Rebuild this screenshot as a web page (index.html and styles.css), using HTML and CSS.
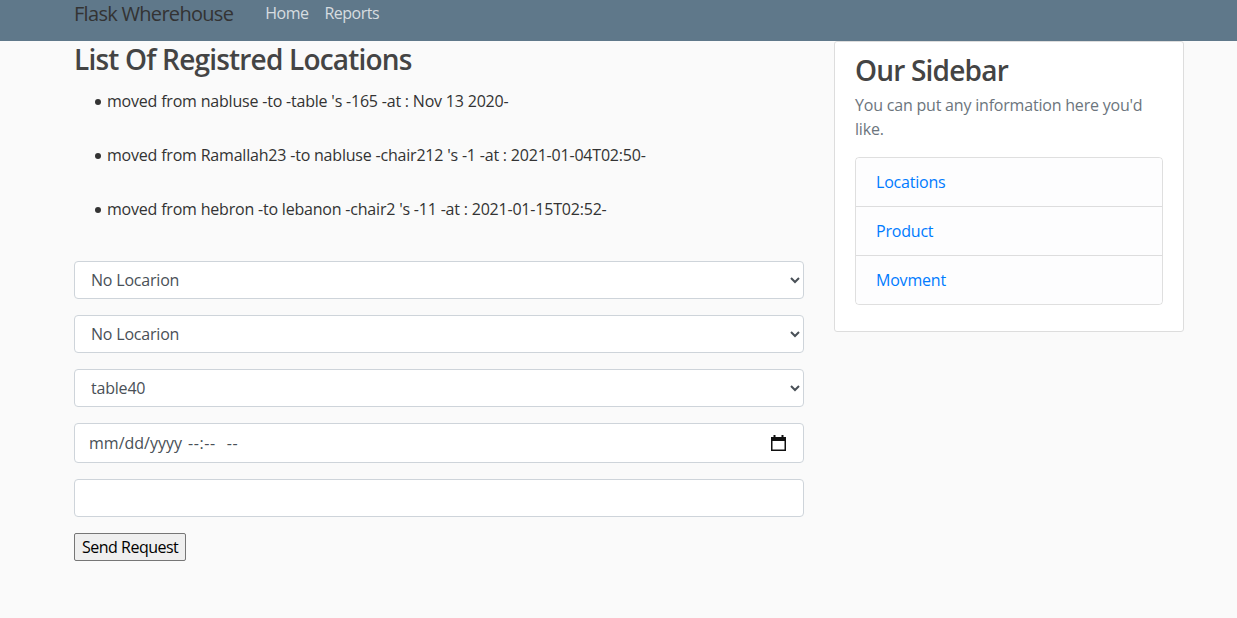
FILE: index.html
```html
<!DOCTYPE html>
<html lang="en">
<head>
<meta charset="utf-8">
<title>Flask Wherehouse</title>
<link rel="stylesheet" href="styles.css">
</head>
<body>
<header class="site-header">
  <nav class="navbar">
    <div class="container nav-inner">
      <a class="brand" href="#">Flask Wherehouse</a>
      <div class="nav-links">
        <a class="nav-link" href="#">Home</a>
        <a class="nav-link" href="#">Reports</a>
      </div>
    </div>
  </nav>
</header>
<main class="container main-row">
  <div class="col-main">
    <h3 class="page-title">List Of Registred Locations</h3>
    <ul class="moves">
      <li><span class="bullet"></span>moved from nabluse -to -table 's -165 -at : Nov 13 2020-</li>
      <li><span class="bullet"></span>moved from Ramallah23 -to nabluse -chair212 's -1 -at : 2021-01-04T02:50-</li>
      <li><span class="bullet"></span>moved from hebron -to lebanon -chair2 's -11 -at : 2021-01-15T02:52-</li>
    </ul>
    <form class="move-form">
      <div class="form-group">
        <select class="form-control"><option>No Locarion</option></select>
      </div>
      <div class="form-group">
        <select class="form-control"><option>No Locarion</option></select>
      </div>
      <div class="form-group">
        <select class="form-control"><option>table40</option></select>
      </div>
      <div class="form-group">
        <div class="form-control date-field">
          <span class="date-text"><span class="seg">mm/dd/yyyy</span><span class="seg seg-time">--:--</span><span class="seg seg-ampm">--</span></span>
          <svg class="cal-icon" width="15" height="16" viewBox="0 0 15 16" aria-hidden="true">
            <rect x="2.5" y="0" width="2" height="3" fill="#111"/>
            <rect x="10.5" y="0" width="2" height="3" fill="#111"/>
            <rect x="0" y="2" width="15" height="4" fill="#111"/>
            <rect x="0.75" y="3" width="13.5" height="12.25" fill="none" stroke="#111" stroke-width="1.5"/>
          </svg>
        </div>
      </div>
      <div class="form-group">
        <input class="form-control" type="text">
      </div>
      <button class="send-btn" type="submit">Send Request</button>
    </form>
  </div>
  <aside class="col-side">
    <div class="content-section">
      <h3 class="side-title">Our Sidebar</h3>
      <p class="text-muted">You can put any information here you'd like.</p>
      <ul class="list-group">
        <li class="list-group-item"><a href="#">Locations</a></li>
        <li class="list-group-item"><a href="#">Product</a></li>
        <li class="list-group-item"><a href="#">Movment</a></li>
      </ul>
    </div>
  </aside>
</main>
</body>
</html>
```
FILE: styles.css
```css
* { box-sizing: border-box; }
html, body { margin: 0; }
body {
  background: #fafafa;
  color: #333333;
  font-family: "Open Sans", "Noto Sans", sans-serif;
  font-size: 16px;
  line-height: 1.5;
  letter-spacing: -0.2px;
}
.navbar { background: #5f788a; height: 41px; }
.container { width: 1110px; margin-left: 74px; }
.nav-inner { display: flex; align-items: flex-start; }
.brand {
  font-size: 20px;
  line-height: 27px;
  letter-spacing: -0.7px;
  color: #333;
  text-decoration: none;
  margin-right: 24px;
}
.nav-links { display: flex; padding-top: 1px; }
.nav-link {
  color: rgba(255,255,255,.75);
  text-decoration: none;
  line-height: 24px;
  letter-spacing: -0.5px;
  padding: 0 8px;
}
.main-row { display: flex; gap: 30px; align-items: flex-start; }
.col-main { width: 730px; }
.col-side { width: 350px; }
h3 {
  font-size: 28px;
  line-height: 1.2;
  font-weight: 600;
  letter-spacing: -0.8px;
  color: #444444;
  margin: 0 0 6px;
  padding-top: 2px;
}
.moves { list-style: none; margin: 12px 0 40px; padding-left: 21px; }
.moves li { margin-bottom: 30px; }
.moves li:last-child { margin-bottom: 0; }
.bullet {
  display: inline-block;
  width: 6px;
  height: 6px;
  border-radius: 50%;
  background: #333;
  margin-right: 6px;
  vertical-align: middle;
}
.form-group { margin-bottom: 16px; }
.form-control {
  display: block;
  width: 100%;
  height: 38px;
  padding: 6px 12px;
  font: inherit;
  letter-spacing: inherit;
  color: #495057;
  background: #fff;
  border: 1px solid #ced4da;
  border-radius: 4px;
}
.date-field {
  display: flex;
  align-items: center;
  justify-content: space-between;
  height: 40px;
  padding: 0 17px 0 14px;
}
.date-text { display: flex; color: #495057; letter-spacing: 0; }
.seg-time { margin-left: 6px; letter-spacing: 0.6px; }
.seg-ampm { margin-left: 11px; letter-spacing: 0.6px; }
.cal-icon { display: block; }
.send-btn {
  font: inherit;
  line-height: 24px;
  letter-spacing: -0.5px;
  padding: 1px 7px;
  color: #000;
  background: #efefef;
  border: 1px solid #767676;
  border-radius: 2px;
}
.content-section {
  background: #fff;
  padding: 10px 20px;
  border: 1px solid #dddddd;
  border-radius: 3px;
  margin-bottom: 20px;
}
.side-title { margin-bottom: 5px; }
.text-muted { color: #6c757d; margin: 0 0 16px; }
.list-group {
  list-style: none;
  margin: 0 0 16px;
  padding: 0;
  border: 1px solid rgba(0,0,0,.125);
  border-radius: 4px;
}
.list-group-item {
  background: #fdfdfe;
  padding: 12px 20px;
  border-top: 1px solid rgba(0,0,0,.125);
}
.list-group-item:first-child { border-top: 0; border-radius: 4px 4px 0 0; }
.list-group-item:last-child { border-radius: 0 0 4px 4px; }
.list-group-item a { color: #007bff; text-decoration: none; }
```
